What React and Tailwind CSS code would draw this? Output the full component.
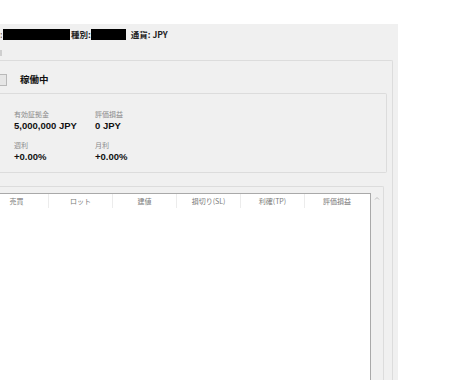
const FONT = { fontFamily: '"Noto Sans CJK JP", "Liberation Sans", sans-serif' };
const NUM = { fontFamily: '"Liberation Sans", "Noto Sans CJK JP", sans-serif' };

const COLUMNS = ["売買", "ロット", "建値", "損切り(SL)", "利確(TP)", "評価損益"];

function Stat({ label, value }) {
  return (
    <div className="flex flex-col">
      <span className="text-[7px] leading-[10px] text-[#8a8a8a]" style={FONT}>{label}</span>
      <span className="text-[9.5px] leading-[13px] font-bold text-[#111]" style={NUM}>{value}</span>
    </div>
  );
}

export default function App() {
  return (
    <div className="w-[460px] h-[380px] bg-white overflow-hidden">
      <div className="h-[24px]" />
      <div className="w-[398px] h-[356px] bg-[#f0f0f0] flex flex-col">
        {/* account row */}
        <div className="h-[21px] flex items-center text-[8.5px] font-bold text-[#222]" style={FONT}>
          <span className="w-[2px] text-[#777] overflow-hidden">:</span>
          <div className="ml-[1px] w-[67px] h-[11px] bg-black" />
          <span className="ml-[1px]">種別:</span>
          <div className="w-[35px] h-[11px] bg-black" />
          <span className="ml-[5px]">通貨: JPY</span>
        </div>
        <div className="h-[15px] flex items-center">
          <span className="w-[2px] h-[6px] bg-[#cfcfcf]" />
        </div>

        {/* status group */}
        <div className="w-[393px] flex-1 border-t border-r border-[#dcdcdc] rounded-tr-[2px] flex flex-col">
          <div className="h-[25px] mt-[6px] flex items-center">
            <div className="w-[7px] h-[12px] border border-l-0 border-[#b9b9b9] bg-[#e6e6e6]" />
            <span className="ml-[13px] text-[9.5px] font-bold text-[#111]" style={FONT}>稼働中</span>
          </div>

          <div className="mt-[1px] mr-[5px] h-[80px] border border-l-0 border-[#dcdcdc] rounded-r-[2px] pl-[14px] pt-[15px] flex flex-col gap-[8px]">
            <div className="flex">
              <div className="w-[81px]"><Stat label="有効証拠金" value="5,000,000 JPY" /></div>
              <Stat label="評価損益" value="0 JPY" />
            </div>
            <div className="flex">
              <div className="w-[81px]"><Stat label="週利" value="+0.00%" /></div>
              <Stat label="月利" value="+0.00%" />
            </div>
          </div>

          <div className="mt-[13px] mr-[8px] flex-1 border-t border-r border-[#dcdcdc] rounded-tr-[2px] flex pt-[6px]">
            <div className="w-[373px] bg-white border border-l-0 border-b-0 border-[#a9a9a9] flex flex-col">
              <div className="h-[14px] flex items-center ml-[-15px]">
                {COLUMNS.map((c, i) => (
                  <div
                    key={c}
                    className={
                      "w-[64px] h-full flex items-center justify-center text-[7px] text-[#7a7a7a] " +
                      (i < COLUMNS.length - 1 ? "border-r border-[#ececec]" : "")
                    }
                    style={FONT}
                  >
                    {c}
                  </div>
                ))}
              </div>
            </div>
            <div className="w-[12px] flex justify-center">
              <svg width="6" height="5" viewBox="0 0 6 5" className="mt-[3px]">
                <path d="M1 3.5 L3 1.5 L5 3.5" fill="none" stroke="#b0b0b0" strokeWidth="0.8" />
              </svg>
            </div>
          </div>
        </div>
      </div>
    </div>
  );
}
